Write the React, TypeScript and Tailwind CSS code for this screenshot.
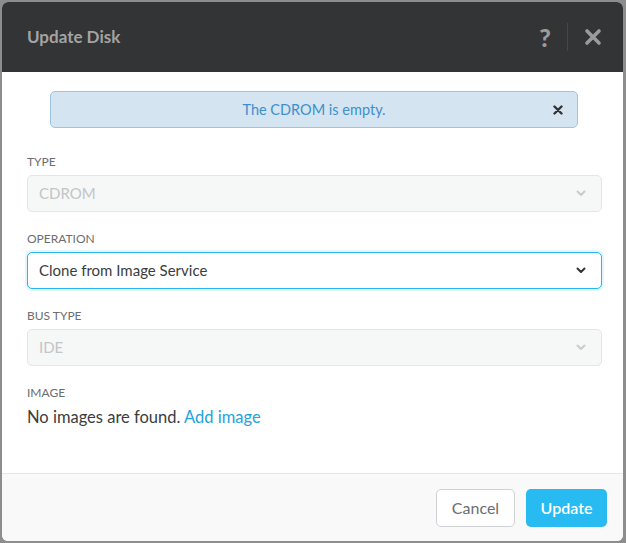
function Chevron({ color }: { color: string }) {
  return (
    <svg width="10" height="7" viewBox="0 0 10 7" className="shrink-0">
      <path d="M1.5 1.5 L5 5 L8.5 1.5" fill="none" stroke={color} strokeWidth="2" strokeLinecap="round" strokeLinejoin="round" />
    </svg>
  )
}

function Field({
  label,
  value,
  disabled,
  focused,
}: {
  label: string
  value: string
  disabled?: boolean
  focused?: boolean
}) {
  return (
    <div className="flex flex-col">
      <span className="h-4 text-[12px] leading-4 uppercase text-[#6a6e72]">{label}</span>
      <div
        className={
          disabled
            ? "mt-[5px] flex h-[37px] items-center justify-between rounded-[5px] border border-[#e3e5e7] bg-[#f6f7f7] pl-[11px] pr-[15px] text-[15px] text-[#c3c5c7]"
            : "mt-[5px] flex h-[37px] items-center justify-between rounded-[5px] border border-[#27b4ef] bg-white pl-[11px] pr-[15px] text-[15px] text-[#3a3d40] shadow-[0_0_0_2px_#e3f5fd]"
        }
      >
        <span>{value}</span>
        <Chevron color={focused ? "#333" : "#c9ccce"} />
      </div>
    </div>
  )
}

export default function App() {
  return (
    <div className="h-[543px] w-[626px] bg-[#8d8d8d] pb-[2px] pl-[2px] pr-[3px] pt-[2px] font-['Lato','Liberation_Sans',sans-serif]">
      <div className="flex h-full flex-col overflow-hidden rounded-[6px] bg-white">
        {/* Header */}
        <div className="flex h-[70px] shrink-0 items-center justify-between bg-[#333436] pl-[25px] pr-[21px]">
          <h1 className="text-[17px] font-bold text-[#a3a3a3]">Update Disk</h1>
          <div className="flex items-center">
            <span className="text-[25px] font-black leading-none text-[#9b9b9b]">?</span>
            <div className="mx-[16px] h-[28px] w-px bg-[#45474a]" />
            <svg width="18" height="18" viewBox="0 0 18 18">
              <path d="M3 3 L15 15 M15 3 L3 15" stroke="#9b9b9b" strokeWidth="3.6" strokeLinecap="round" />
            </svg>
          </div>
        </div>

        {/* Body */}
        <div className="flex flex-1 flex-col pl-[25px] pr-[21px]">
          <div className="relative ml-[23px] mr-[24px] mt-[19px] flex h-[37px] items-center justify-center rounded-[5px] border border-[#9cc4e4] bg-[#d4e4f1]">
            <span className="text-[14.5px] text-[#3f8fcc]">The CDROM is empty.</span>
            <svg width="10" height="10" viewBox="0 0 10 10" className="absolute right-[14px]">
              <path d="M1.5 1.5 L8.5 8.5 M8.5 1.5 L1.5 8.5" stroke="#333" strokeWidth="2.4" strokeLinecap="round" />
            </svg>
          </div>

          <div className="mt-[26px] flex flex-col gap-[19px]">
            <Field label="Type" value="CDROM" disabled />
            <Field label="Operation" value="Clone from Image Service" focused />
            <Field label="Bus Type" value="IDE" disabled />
            <div className="flex flex-col">
              <span className="h-4 text-[12px] leading-4 uppercase text-[#6a6e72]">Image</span>
              <p className="mt-[6px] text-[16.5px] leading-5 text-[#3a3d40]">
                No images are found. <a className="text-[#1ea3dc]">Add image</a>
              </p>
            </div>
          </div>
        </div>

        {/* Footer */}
        <div className="flex h-[68px] shrink-0 items-center justify-end gap-[11px] border-t border-[#e6e6e6] bg-[#f9f9f9] pr-[16px]">
          <button className="h-[38px] w-[79px] rounded-[5px] border border-[#cfd2d5] bg-white text-[16px] text-[#6a6e72]">
            Cancel
          </button>
          <button className="h-[38px] w-[81px] rounded-[5px] bg-[#27bbf1] text-[16px] font-semibold text-white">
            Update
          </button>
        </div>
      </div>
    </div>
  )
}
